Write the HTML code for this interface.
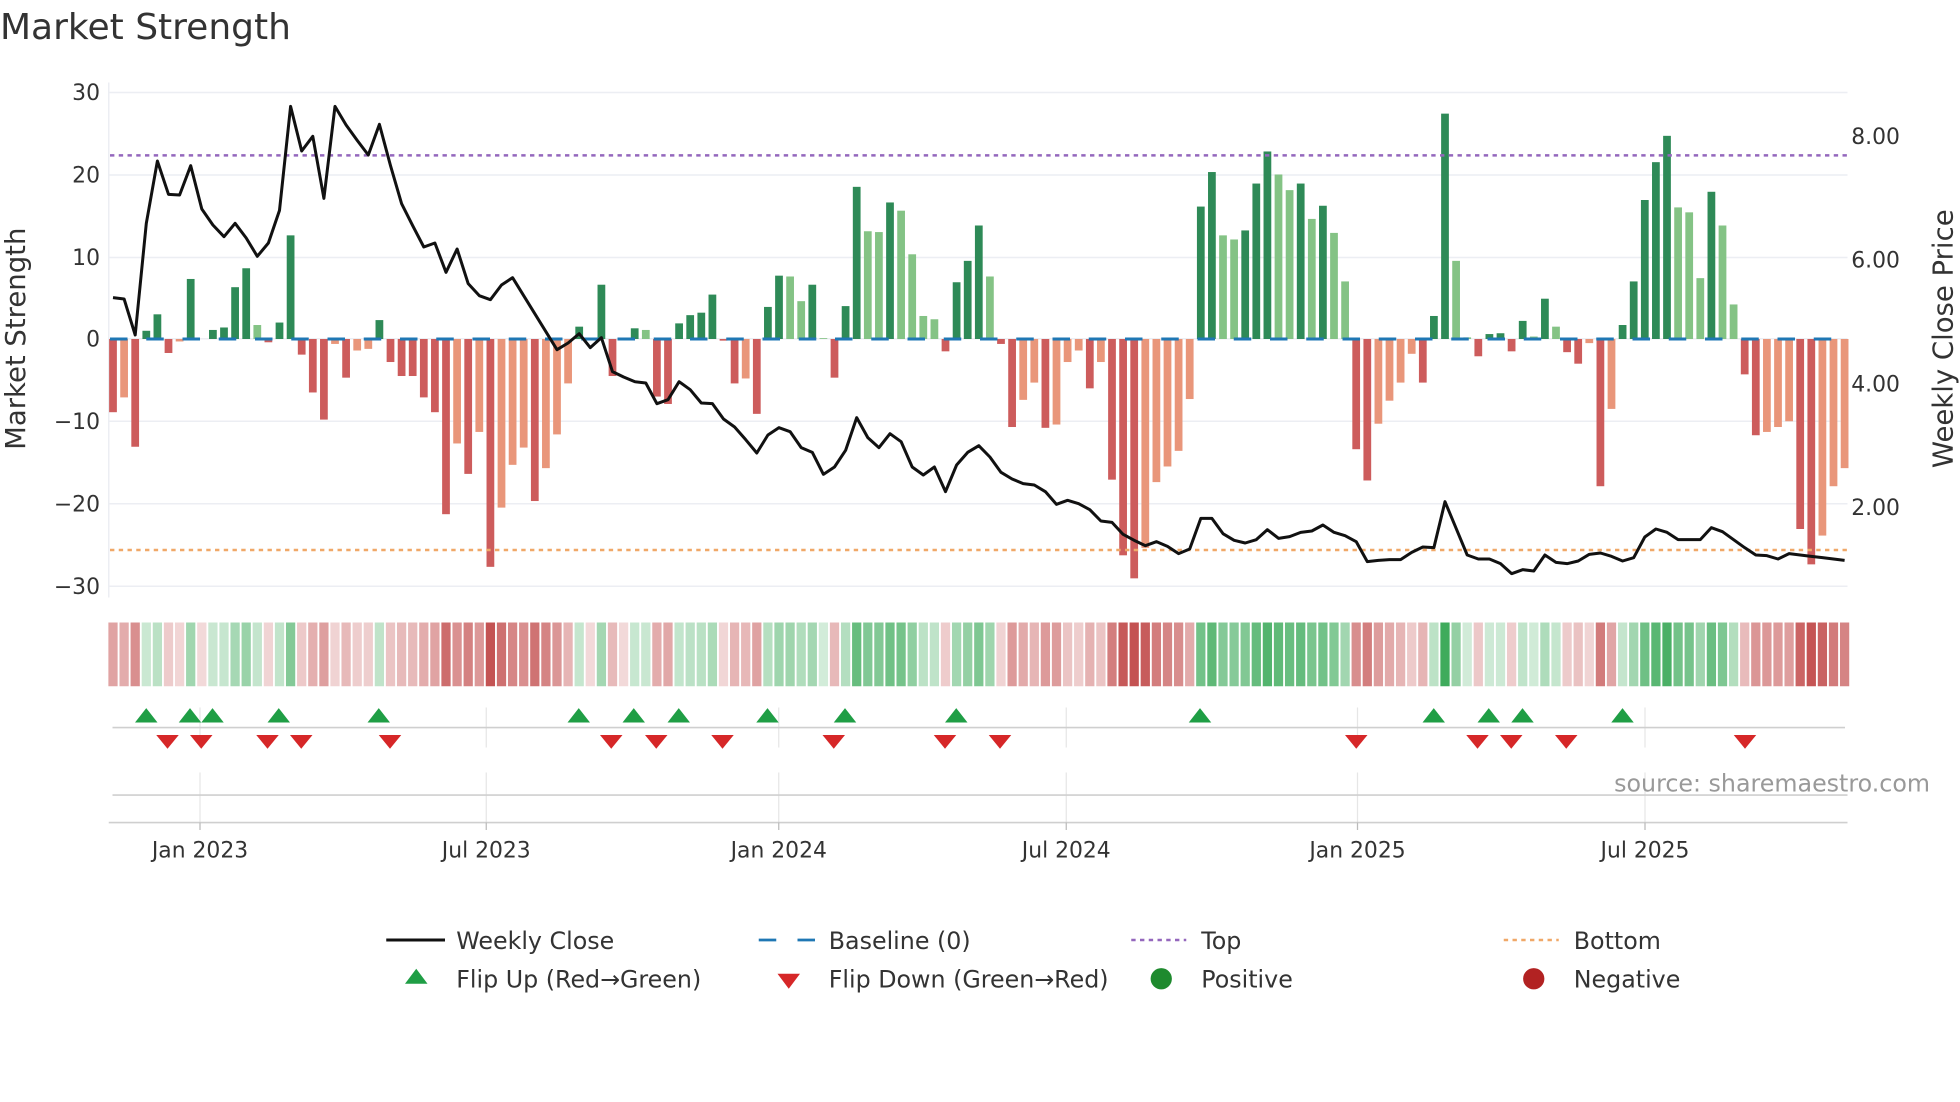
<!DOCTYPE html>
<html><head><meta charset="utf-8"><style>
html,body{margin:0;padding:0;background:#fff;}
svg{display:block;font-family:"DejaVu Sans","Liberation Sans",sans-serif;}
</style></head><body>
<svg id="s" width="1960" height="1102" viewBox="0 0 1568 881.6" xmlns="http://www.w3.org/2000/svg">
<rect width="1568" height="882" fill="#fff"/>
<text x="0" y="31" font-size="28.8" fill="#333">Market Strength</text>
<g stroke="#eceef3" stroke-width="1.2">
<line x1="87" x2="1478" y1="74" y2="74"/><line x1="87" x2="1478" y1="140" y2="140"/><line x1="87" x2="1478" y1="206" y2="206"/><line x1="87" x2="1478" y1="271" y2="271"/><line x1="87" x2="1478" y1="337" y2="337"/><line x1="87" x2="1478" y1="403" y2="403"/><line x1="87" x2="1478" y1="469" y2="469"/>
<line x1="87" x2="87" y1="66" y2="478"/>
</g>
<g font-size="17.5" fill="#333" text-anchor="end">
<text x="80" y="80">30</text><text x="80" y="146">20</text><text x="80" y="212">10</text><text x="80" y="277">0</text><text x="80" y="343">−10</text><text x="80" y="409">−20</text><text x="80" y="475">−30</text>
</g>
<g font-size="17.5" fill="#333">
<text x="1481" y="115">8.00</text><text x="1481" y="214">6.00</text><text x="1481" y="313">4.00</text><text x="1481" y="412">2.00</text>
</g>
<text transform="translate(20,271) rotate(-90)" font-size="22" fill="#333" text-anchor="middle">Market Strength</text>
<text transform="translate(1562,271) rotate(-90)" font-size="22" fill="#333" text-anchor="middle">Weekly Close Price</text>
<g id="bars"></g>
<line x1="88" x2="1478" y1="124.3" y2="124.3" stroke="#9467bd" stroke-width="2" stroke-dasharray="3.5 3.5"/>
<line x1="88" x2="1478" y1="440" y2="440" stroke="#f0a868" stroke-width="2" stroke-dasharray="3.5 3.5"/>
<line x1="88" x2="1478" y1="271.2" y2="271.2" stroke="#1f77b4" stroke-width="2.4" stroke-dasharray="14 15"/>
<polyline id="price" fill="none" stroke="#111" stroke-width="2.4" stroke-linejoin="round"/>
<g id="strip"></g>
<g stroke="#e6e6e6" stroke-width="1">
<line x1="160" x2="160" y1="566" y2="598"/><line x1="389" x2="389" y1="566" y2="598"/><line x1="623" x2="623" y1="566" y2="598"/><line x1="853" x2="853" y1="566" y2="598"/><line x1="1086" x2="1086" y1="566" y2="598"/><line x1="1316" x2="1316" y1="566" y2="598"/>
<line x1="160" x2="160" y1="618" y2="658"/><line x1="389" x2="389" y1="618" y2="658"/><line x1="623" x2="623" y1="618" y2="658"/><line x1="853" x2="853" y1="618" y2="658"/><line x1="1086" x2="1086" y1="618" y2="658"/><line x1="1316" x2="1316" y1="618" y2="658"/>
</g>
<line x1="90" x2="1476" y1="582" y2="582" stroke="#cfcfcf" stroke-width="1.3"/>
<line x1="90" x2="1478" y1="636" y2="636" stroke="#cfcfcf" stroke-width="1.3"/>
<line x1="87" x2="1478" y1="658" y2="658" stroke="#cfcfcf" stroke-width="1.3"/>
<g id="tri"></g>
<text x="1544" y="633" font-size="19" fill="#999" text-anchor="end">source: sharemaestro.com</text>
<g stroke="#bbb" stroke-width="1"><line x1="160" x2="160" y1="658" y2="664"/><line x1="389" x2="389" y1="658" y2="664"/><line x1="623" x2="623" y1="658" y2="664"/><line x1="853" x2="853" y1="658" y2="664"/><line x1="1086" x2="1086" y1="658" y2="664"/><line x1="1316" x2="1316" y1="658" y2="664"/></g>
<g font-size="17.5" fill="#333" text-anchor="middle">
<text x="160" y="686">Jan 2023</text><text x="389" y="686">Jul 2023</text><text x="623" y="686">Jan 2024</text><text x="853" y="686">Jul 2024</text><text x="1086" y="686">Jan 2025</text><text x="1316" y="686">Jul 2025</text>
</g>
<g font-size="19" fill="#333">
<line x1="309" x2="356" y1="752" y2="752" stroke="#111" stroke-width="2.4"/>
<text x="365" y="759">Weekly Close</text>
<line x1="607" x2="652" y1="752" y2="752" stroke="#1f77b4" stroke-width="2.2" stroke-dasharray="14 17"/>
<text x="663" y="759">Baseline (0)</text>
<line x1="905" x2="949" y1="752" y2="752" stroke="#9467bd" stroke-width="2" stroke-dasharray="3.5 3.5"/>
<text x="961" y="759">Top</text>
<line x1="1203" x2="1247" y1="752" y2="752" stroke="#f0a868" stroke-width="2" stroke-dasharray="3.5 3.5"/>
<text x="1259" y="759">Bottom</text>
<polygon points="324,787 342,787 333,775" fill="#1f9e45"/>
<text x="365" y="790">Flip Up (Red→Green)</text>
<polygon points="622,779 640,779 631,791" fill="#d62728"/>
<text x="663" y="790">Flip Down (Green→Red)</text>
<circle cx="929" cy="783" r="8.5" fill="#1e8a2e"/>
<text x="961" y="790">Positive</text>
<circle cx="1227" cy="783" r="8.5" fill="#b22222"/>
<text x="1259" y="790">Negative</text>
</g>
</svg>
<script>
var B="-8.9D,-7.1L,-13.1D,1.0D,3.0D,-1.7D,-0.3L,7.3D,0D,1.1D,1.4D,6.3D,8.6D,1.7L,-0.4D,2.0D,12.6D,-1.9D,-6.5D,-9.8D,-0.6L,-4.7D,-1.4L,-1.2L,2.3D,-2.8D,-4.5D,-4.5D,-7.1D,-8.9D,-21.3D,-12.7L,-16.4D,-11.3L,-27.7D,-20.5L,-15.3L,-13.2L,-19.7D,-15.7L,-11.6L,-5.4L,1.5D,0D,6.6D,-4.5D,0D,1.3D,1.1L,-7.0D,-7.9D,1.9D,2.9D,3.2D,5.4D,-0.2D,-5.4D,-4.8L,-9.1D,3.9D,7.7D,7.6L,4.6L,6.6D,0.1L,-4.7D,4.0D,18.5D,13.1L,13.0L,16.6D,15.6L,10.3L,2.8L,2.4L,-1.5D,6.9D,9.5D,13.8D,7.6L,-0.6D,-10.7D,-7.4L,-5.3L,-10.8D,-10.4L,-2.8L,-1.4L,-6.0D,-2.8L,-17.1D,-26.3D,-29.1D,-25.4L,-17.4L,-15.5L,-13.6L,-7.3L,16.1D,20.3D,12.6L,12.1L,13.2D,18.9D,22.8D,20.0L,18.1L,18.9D,14.6L,16.2D,12.9L,7.0L,-13.4D,-17.2D,-10.3L,-7.5L,-5.3L,-1.8L,-5.3D,2.8D,27.4D,9.5L,0.2L,-2.1D,0.6D,0.7D,-1.5D,2.2D,0.3L,4.9D,1.5L,-1.6D,-3.0D,-0.5L,-17.9D,-8.5L,1.7D,7.0D,16.9D,21.5D,24.7D,16.0L,15.4L,7.4L,17.9D,13.8L,4.2L,-4.3D,-11.7D,-11.3L,-10.7L,-10.0L,-23.1D,-27.4D,-23.9L,-17.9L,-15.7L".split(",");
var P=[653,657,765,430,243,343,345,257,387,435,470,430,474,529,489,391,79,213,169,355,79,135,181,225,133,257,371,437,501,489,577,507,611,647,659,615,593,647,701,755,809,789,761,803,773,875,891,905,909,971,959,905,929,
969,971,1017,1041,1079,1119,1065,1043,1055,1103,1117,1183,1161,1111,1013,1073,1103,1061,1085,1161,1185,1161,1235,1155,1117,1097,1131,1177,1197,1211,1215,1235,1273,1261,1271,1289,1323,1327,1363,1381,1397,1385,1399,1421,1407,1315,1315,1361,1381,1389,1379,1349,1375,1370,
1357,1353,1335,1357,1367,1385,1445,1441,1439,1439,1417,1401,1403,1265,1345,1425,1437,1437,1451,1481,1469,1473,1425,1447,1451,1443,1423,1419,1429,1443,1433,1371,1347,1357,1379,1379,1379,1343,1355,1379,1403,1425,1427,1437,1421,1425,1429,1433,1437,1441];
var bars="",strip="",pts=[];
function X(i){return 90.4+8.88*i;}
for(var i=0;i<B.length;i++){
 var s=B[i],t=s.slice(-1),v=parseFloat(s);
 var x=X(i);
 if(v!==0){
  var h=Math.abs(v)*6.58,y=v>0?271.2-h:271.2;
  var c=v>0?(t=="D"?"#2e8a57":"#84c385"):(t=="D"?"#cd5c5c":"#e9967a");
  bars+='<rect x="'+(x-3.1).toFixed(2)+'" y="'+y.toFixed(2)+'" width="6.2" height="'+h.toFixed(2)+'" fill="'+c+'"/>';
 }
 var a=Math.min(1,0.22+0.78*Math.pow(Math.min(Math.abs(v),28)/28,0.8));
 var base=v>0?[60,170,90]:[196,82,82];
 var r=Math.round(255+(base[0]-255)*a),g=Math.round(255+(base[1]-255)*a),b=Math.round(255+(base[2]-255)*a);
 strip+='<rect x="'+(x-3.7).toFixed(2)+'" y="498" width="7.4" height="51" fill="rgb('+r+','+g+','+b+')"/>';
 pts.push(x.toFixed(2)+","+(64+P[i]/3.75).toFixed(2));
}
document.getElementById("bars").innerHTML=bars;
document.getElementById("strip").innerHTML=strip;
document.getElementById("price").setAttribute("points",pts.join(" "));
var up=[117,152,170,223,303,463,507,543,614,676,765,960,1147,1191,1218,1298];
var dn=[134,161,214,241,312,489,525,578,667,756,800,1085,1182,1209,1253,1396];
var tr="";
up.forEach(function(c){tr+='<polygon points="'+(c-9)+',578 '+(c+9)+',578 '+c+',566.5" fill="#1f9e45"/>';});
dn.forEach(function(c){tr+='<polygon points="'+(c-9)+',588 '+(c+9)+',588 '+c+',599" fill="#d62728"/>';});
document.getElementById("tri").innerHTML=tr;
</script>
</body></html>
